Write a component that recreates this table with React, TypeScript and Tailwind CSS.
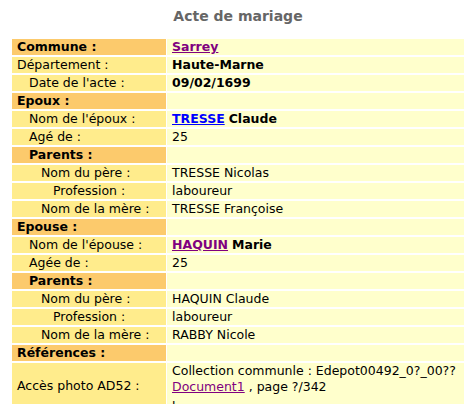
import type { ReactNode } from 'react'

type Row = {
    label: string
    kind: 'head' | 'label'
    indent?: number
    value?: ReactNode
}

const purple = 'text-[#800080] underline font-bold'
const blue = 'text-[#0000ff] underline font-bold'

const rows: Row[] = [
    { label: 'Commune :', kind: 'head', value: <a className={purple}>Sarrey</a> },
    { label: 'Département :', kind: 'label', indent: 0, value: <b>Haute-Marne</b> },
    { label: "Date de l'acte :", kind: 'label', indent: 1, value: <b>09/02/1699</b> },
    { label: 'Epoux :', kind: 'head' },
    { label: "Nom de l'époux :", kind: 'label', indent: 1, value: <><a className={blue}>TRESSE</a> <b>Claude</b></> },
    { label: 'Agé de :', kind: 'label', indent: 1, value: '25' },
    { label: 'Parents :', kind: 'head', indent: 1 },
    { label: 'Nom du père :', kind: 'label', indent: 2, value: 'TRESSE Nicolas' },
    { label: 'Profession :', kind: 'label', indent: 3, value: 'laboureur' },
    { label: 'Nom de la mère :', kind: 'label', indent: 2, value: 'TRESSE Françoise' },
    { label: 'Epouse :', kind: 'head' },
    { label: "Nom de l'épouse :", kind: 'label', indent: 1, value: <><a className={purple}>HAQUIN</a> <b>Marie</b></> },
    { label: 'Agée de :', kind: 'label', indent: 1, value: '25' },
    { label: 'Parents :', kind: 'head', indent: 1 },
    { label: 'Nom du père :', kind: 'label', indent: 2, value: 'HAQUIN Claude' },
    { label: 'Profession :', kind: 'label', indent: 3, value: 'laboureur' },
    { label: 'Nom de la mère :', kind: 'label', indent: 2, value: 'RABBY Nicole' },
    { label: 'Références :', kind: 'head' },
]

// indentation mimics the &nbsp; padding of the original page
const indentCls = ['pl-[5px]', 'pl-[17px]', 'pl-[29px]', 'pl-[41px]']

export default function App() {
    return (
        <div className="w-[473px] h-[404px] overflow-hidden bg-white text-[12.5px] leading-[16px] text-black" style={{ fontFamily: '"DejaVu Sans", Verdana, sans-serif' }}>
            <h1 className="pt-[7px] pb-[14px] w-[452px] ml-[12px] text-center text-[14px] leading-[18px] font-bold text-[#666666]">
                Acte de mariage
            </h1>
            <div className="ml-[12px] w-[452px] grid grid-cols-[154px_1fr] gap-x-px gap-y-[2px]">
                {rows.map((r, i) => (
                    <div key={i} className="contents">
                        <div
                            className={`h-[16px] whitespace-nowrap ${indentCls[r.indent ?? 0]} ${
                                r.kind === 'head' ? 'bg-[#fcca6c] font-bold' : 'bg-[#ffec8c]'
                            }`}
                        >
                            {r.label}
                        </div>
                        <div className="h-[16px] pl-[5px] whitespace-nowrap bg-[#ffffcc]">{r.value}</div>
                    </div>
                ))}
                <div className="bg-[#ffec8c] pl-[5px] pt-[15px]">Accès photo AD52 :</div>
                <div className="bg-[#ffffcc] pl-[5px]">
                    <div className="whitespace-nowrap">Collection communle : Edepot00492_0?_00??</div>
                    <div>
                        <a className="text-[#800080] underline">Document1</a> , page ?/342
                    </div>
                    <div className="mt-[4px]">l</div>
                </div>
            </div>
        </div>
    )
}
